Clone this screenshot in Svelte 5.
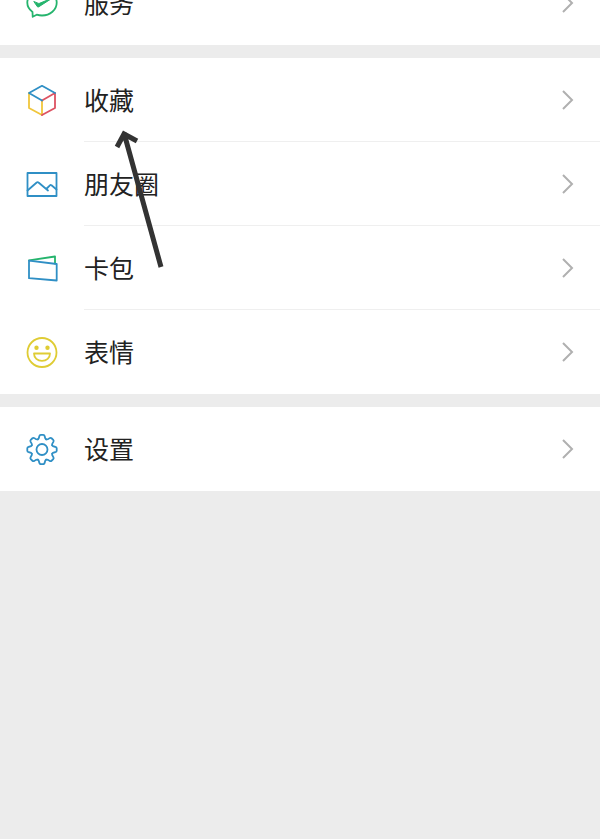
<script lang="ts">
  interface Item {
    icon: string;
    label: string;
  }

  const groups: Item[][] = [
    [{ icon: "service", label: "服务" }],
    [
      { icon: "favorites", label: "收藏" },
      { icon: "moments", label: "朋友圈" },
      { icon: "cards", label: "卡包" },
      { icon: "stickers", label: "表情" },
    ],
    [{ icon: "settings", label: "设置" }],
  ];

  // Rotation of each tooth on the settings gear
  const teeth = [0, 45, 90, 135, 180, 225, 270, 315];
</script>

<main>
  {#each groups as group}
    <ul class="group">
      {#each group as item}
        <li>
          <a class="row" href={`#${item.icon}`}>
            <svg class="icon" viewBox="0 0 32 32" aria-hidden="true">
              {#if item.icon === "service"}
                <g class="green">
                  <path d="M6.5 25C3.2 22.500 1.300 19.300 1.300 15.800 1.300 8.800 7.800 3.100 16 3.100s14.700 5.700 14.700 12.700S24.200 28.500 16 28.500c-1.900 0-3.700-.3-5.300-.8L6.700 29.800Z" />
                  <path class="check" d="M8 14.800l3.400 4.900c.3.400.7.500 1.200.2L26.500 11l-13 5.300c-.6.200-1 .2-1.500-.1Z" />
                </g>
              {:else if item.icon === "favorites"}
                <path class="yellow" d="M3 9v15L16 31V16.5" />
                <path class="red" d="M16 31 29 24V9L16 16.5" />
                <path class="blue" d="M16 16.5 3 9 16 1.8 29 9" />
              {:else if item.icon === "moments"}
                <path class="blue" d="M1.500 5h29v23h-29Z" />
                <path class="blue" d="M1.5 22.5 10.7 14.500Q11.600 13.700 12.500 14.500L22 22.500M20.300 21 23.900 17.300Q24.700 16.500 25.500 17.300L30.500 21.500" />
              {:else if item.icon === "cards"}
                <path class="green" d="M3 8.3 29 4.5V11.5" />
                <path class="blue" d="M3 8.7 30.7 12V28.5L3 26.2Z" />
              {:else if item.icon === "stickers"}
                <g class="yellow face">
                  <circle cx="16" cy="16.5" r="14.5" />
                  <path d="M8 17.5h16c0 4.400-3.500 7.300-8 7.300s-8-2.900-8-7.300Z" />
                  <circle class="eye" cx="10.5" cy="11.7" r="1.3" />
                  <circle class="eye" cx="21.5" cy="11.7" r="1.3" />
                </g>
              {:else}
                <g class="blue" transform="translate(16 16.5)">
                  {#each teeth as angle}
                    <path
                      transform={`rotate(${angle})`}
                      d="M-4.2-10.2C-3-10.7-2.9-12-2.7-13.3Q-2.4-14.700-1.200-14.700H1.200Q2.400-14.700 2.700-13.300C2.900-12 3-10.700 4.200-10.200"
                    />
                  {/each}
                  <circle r="5.5" />
                </g>
              {/if}
            </svg>
            <span class="label">{item.label}</span>
            <svg class="chevron" viewBox="0 0 12 20" aria-hidden="true">
              <path d="M1 1 10 10 1 19" />
            </svg>
          </a>
        </li>
      {/each}
    </ul>
  {/each}

  <svg class="pointer" viewBox="0 0 52 142" aria-hidden="true">
    <path d="M49 139 12 5M5 19 12 6 25 13" />
  </svg>
</main>

<style>
  :global(body) {
    background: #ececec;
  }

  main {
    position: relative;
    display: flow-root;
    font-family: "KaiTi", "Kaiti SC", "STKaiti", "Noto Sans CJK SC", sans-serif;
  }

  .group {
    margin: 0 0 13px;
    padding: 0;
    background: #fff;
    list-style: none;
  }

  /* The list is scrolled part of the way through its first row */
  .group:first-child {
    margin-top: -39px;
  }

  .row {
    display: flex;
    align-items: center;
    box-sizing: border-box;
    height: 84px;
    padding: 0 26px;
    color: #222;
    text-decoration: none;
  }

  li:not(:last-child) .row {
    background: linear-gradient(#efefef, #efefef) 84px 100% / 100% 1px no-repeat;
  }

  .icon {
    flex: none;
    width: 32px;
    height: 32px;
    margin-right: 26px;
    fill: none;
    stroke-width: 1.8;
    stroke-linejoin: round;
    stroke-linecap: round;
  }

  .label {
    flex: 1;
    padding-bottom: 2px;
    font-size: 25px;
    line-height: 36px;
  }

  .chevron {
    flex: none;
    width: 12px;
    height: 20px;
    fill: none;
    stroke: #b0b0b0;
    stroke-width: 2;
  }

  .blue {
    stroke: #2f8fc5;
  }

  .green {
    stroke: #25b46d;
  }

  .yellow {
    stroke: #f0c63c;
  }

  .red {
    stroke: #dd5262;
  }

  .face {
    stroke: #dfcc34;
  }

  .check {
    fill: #25b46d;
    stroke-width: 1;
  }

  .eye {
    fill: #dfcc34;
  }

  .pointer {
    position: absolute;
    top: 128px;
    left: 112px;
    width: 52px;
    height: 142px;
    fill: none;
    stroke: #333;
    stroke-width: 5;
    pointer-events: none;
  }
</style>
